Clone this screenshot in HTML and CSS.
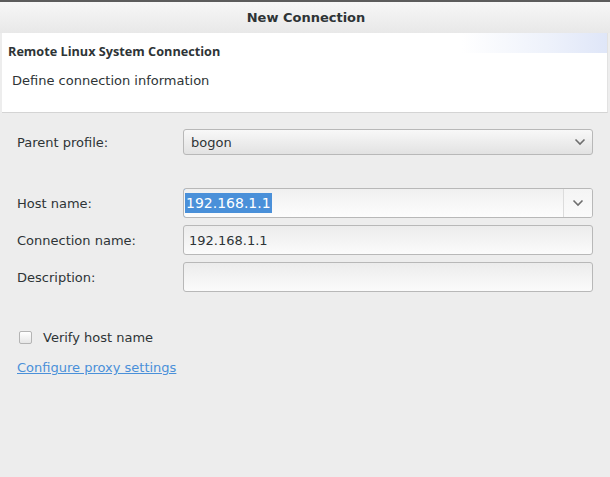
FILE: index.html
```html
<!DOCTYPE html>
<html>
<head>
<meta charset="utf-8">
<link rel="stylesheet" href="styles.css">
</head>
<body>
<div class="window">
  <div class="titlebar">New Connection</div>
  <div class="header">
    <div class="header-title">Remote Linux System Connection</div>
    <div class="header-desc">Define connection information</div>
  </div>
  <div class="content">
    <div class="row row-profile">
      <div class="label">Parent profile:</div>
      <div class="combo">
        <span class="combo-text">bogon</span>
        <svg class="chev" width="12" height="8" viewBox="0 0 12 8"><path d="M1.5 1.5 L6 6 L10.5 1.5" fill="none" stroke="#6e6e6e" stroke-width="1.6"/></svg>
      </div>
    </div>
    <div class="row row-host">
      <div class="label">Host name:</div>
      <div class="ecombo">
        <div class="ecombo-input"><span class="sel">192.168.1.1</span></div>
        <div class="ecombo-btn"><svg class="chev" width="12" height="8" viewBox="0 0 12 8"><path d="M1.5 1.5 L6 6 L10.5 1.5" fill="none" stroke="#6e6e6e" stroke-width="1.6"/></svg></div>
      </div>
    </div>
    <div class="row">
      <div class="label">Connection name:</div>
      <div class="entry">192.168.1.1</div>
    </div>
    <div class="row">
      <div class="label">Description:</div>
      <div class="entry"></div>
    </div>
    <div class="check-row">
      <span class="checkbox"></span>
      <span class="check-label">Verify host name</span>
    </div>
    <a class="link" href="#">Configure proxy settings</a>
  </div>
</div>
</body>
</html>
```
FILE: styles.css
```css
html, body {
  margin: 0;
  padding: 0;
  width: 610px;
  height: 477px;
  overflow: hidden;
  background: #ededed;
  font-family: "DejaVu Sans", "Noto Sans", sans-serif;
  font-size: 13px;
  color: #2e3436;
}
.window {
  height: 477px;
  display: flex;
  flex-direction: column;
  border-top: 2px solid #5c5c5c;
  box-sizing: border-box;
}
.titlebar {
  height: 31px;
  line-height: 31px;
  text-align: center;
  font-weight: bold;
  font-size: 13px;
  color: #2e3436;
  background: linear-gradient(#f7f7f7, #e8e8e8);
  padding-left: 2px;
}
.header {
  margin: 0 2px 0 2px;
  height: 79px;
  border-bottom: 1px solid #d4d4d4;
  border-right: 1px solid #e2e2e2;
  background-image:
    linear-gradient(175deg, #ffffff 0, #ffffff 45%, rgba(255,255,255,0) 55%),
    linear-gradient(90deg, #ffffff 0, #ffffff 76%, #eef2fb 90%, #dfe6f8 100%);
  background-size: 100% 20px, 100% 20px;
  background-repeat: no-repeat;
  background-color: #fff;
}
.header-title {
  font-family: "Open Sans", "DejaVu Sans", sans-serif;
  font-weight: bold;
  font-size: 12.7px;
  padding: 9px 0 0 6px;
  height: 19px;
}
.header-desc {
  font-size: 13px;
  padding: 12px 0 0 10px;
}
.content {
  padding: 16px 17px 0 17px;
  display: flex;
  flex-direction: column;
}
.row {
  display: flex;
  align-items: center;
  height: 30px;
  margin-bottom: 7px;
}
.row-profile {
  height: 26px;
  margin-bottom: 33px;
}
.label {
  width: 166px;
  flex: none;
}
.combo {
  flex: 1;
  height: 26px;
  box-sizing: border-box;
  border: 1px solid #b8b8b8;
  border-radius: 3px;
  background: linear-gradient(#f8f8f8, #e2e2e2);
  display: flex;
  align-items: center;
  justify-content: space-between;
  padding: 0 6px 0 7px;
}
.ecombo {
  flex: 1;
  height: 30px;
  box-sizing: border-box;
  border: 1px solid #b8b8b8;
  border-radius: 3px;
  display: flex;
  background: linear-gradient(#f2f2f2, #fdfdfd);
  overflow: hidden;
}
.ecombo-input {
  flex: 1;
  border: 1px solid #4a90d9;
  border-right-color: #dcdcdc;
  margin: -1px 0 -1px -1px;
  border-radius: 3px 0 0 3px;
  background: linear-gradient(#f0f0f0, #fdfdfd);
  display: flex;
  align-items: center;
  padding-left: 1px;
}
.sel {
  background: #4a90d9;
  color: #fff;
  padding: 2px 1px;
  line-height: 16px;
  font-size: 14px;
}
.ecombo-btn {
  width: 28px;
  display: flex;
  align-items: center;
  justify-content: center;
  background: linear-gradient(#f4f4f4, #fafafa);
}
.entry {
  flex: 1;
  height: 30px;
  box-sizing: border-box;
  border: 1px solid #b8b8b8;
  border-radius: 3px;
  background: linear-gradient(#ececec, #fbfbfb);
  display: flex;
  align-items: center;
  padding-left: 5px;
}
.check-row {
  display: flex;
  align-items: center;
  margin-top: 28px;
  height: 20px;
}
.checkbox {
  width: 11px;
  height: 11px;
  border: 1px solid #b4b4b4;
  border-radius: 2px;
  background: linear-gradient(#ffffff, #e6e6e6);
  margin-left: 2px;
}
.check-label {
  margin-left: 11px;
}
.link {
  margin-top: 13px;
  color: #4a90d9;
  text-decoration: underline;
  align-self: flex-start;
}
```
